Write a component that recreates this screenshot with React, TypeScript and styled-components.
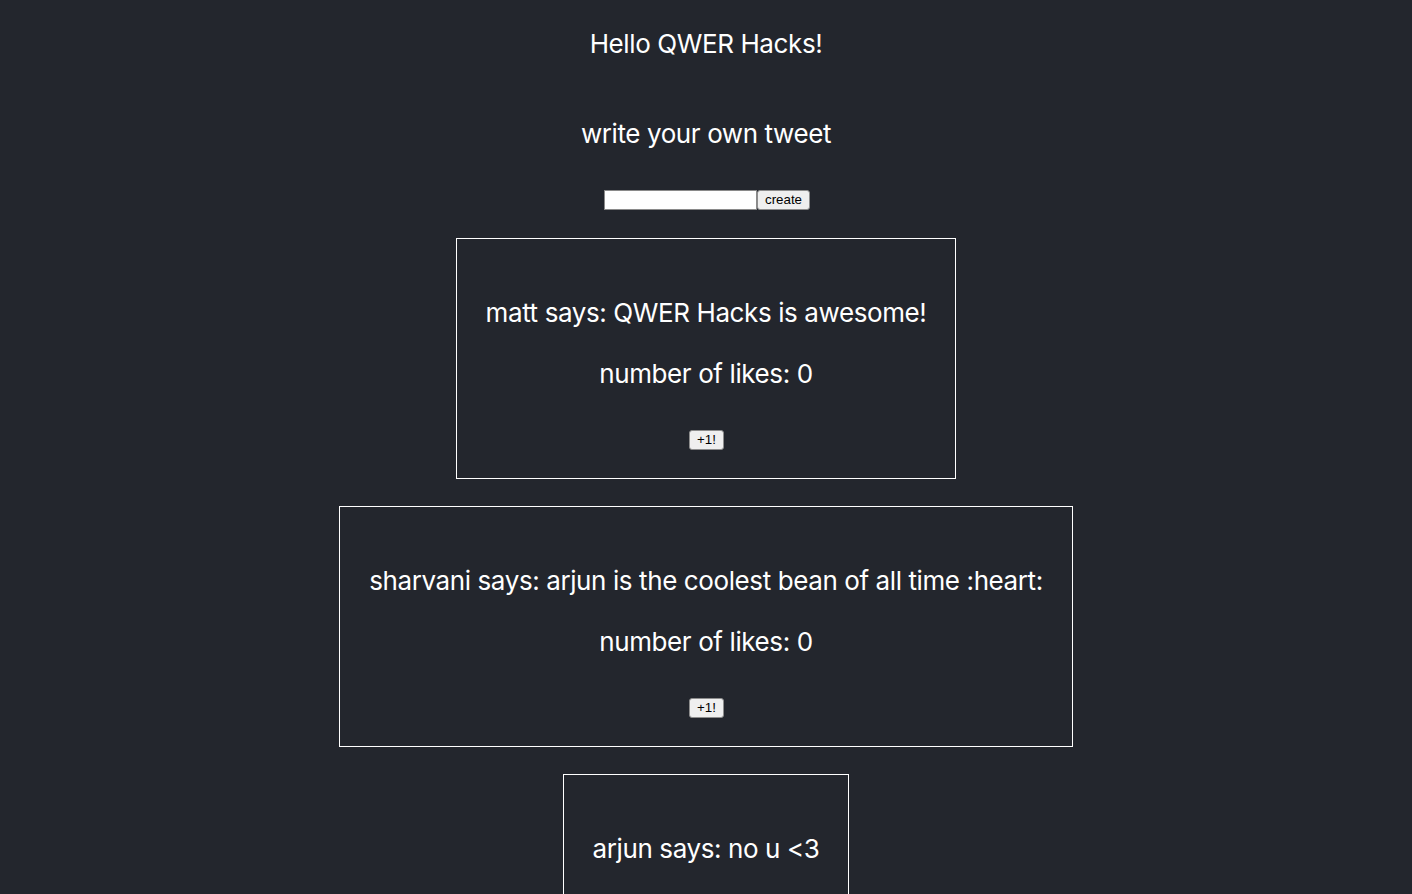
import React from "react";
import styled, { createGlobalStyle } from "styled-components";

const GlobalStyle = createGlobalStyle`
  html, body {
    margin: 0;
    padding: 0;
    background: #23262d;
  }
  body {
    font-family: Inter, "Noto Sans", "Liberation Sans", sans-serif;
    -webkit-font-smoothing: antialiased;
  }
`;

const Page = styled.div`
  min-height: 100vh;
  background: #23262d;
  color: #ffffff;
  display: flex;
  flex-direction: column;
  align-items: center;
  padding-top: 27px;
  text-align: center;
`;

const Line = styled.div<{ $mt?: number }>`
  height: 34px;
  line-height: 34px;
  font-size: 26px;
  letter-spacing: -0.4px;
  margin-top: ${(p) => p.$mt ?? 0}px;
  white-space: nowrap;
`;

const Composer = styled.form`
  display: flex;
  align-items: center;
  margin-top: 39px;
  margin-bottom: 28px;
  padding-left: 2px;
`;

const TextInput = styled.input`
  box-sizing: border-box;
  width: 153px;
  height: 20px;
  margin: 0;
  padding: 1px 2px;
  border: 1px solid #8a8a8a;
  border-radius: 0;
  background: #ffffff;
  font-family: "Liberation Sans", Arial, sans-serif;
  font-size: 13.33px;
  outline: none;
`;

const SmallButton = styled.button`
  box-sizing: border-box;
  height: 20px;
  margin: 0;
  padding: 0 7px;
  background: #efefef;
  color: #000;
  border: 1px solid #8d8d8d;
  border-radius: 3px;
  font-family: "Liberation Sans", Arial, sans-serif;
  font-size: 13.33px;
  line-height: 18px;
  cursor: pointer;
`;

const Card = styled.div`
  box-sizing: border-box;
  border: 1px solid #ffffff;
  padding: 57px 29px 28px;
  margin-bottom: 27px;
  display: flex;
  flex-direction: column;
  align-items: center;
`;

const LikeButton = styled(SmallButton)`
  margin-top: 39px;
  margin-left: 1px;
  padding: 0 7px;
`;

const tweets = [
  { user: "matt", text: "QWER Hacks is awesome!", likes: 0 },
  { user: "sharvani", text: "arjun is the coolest bean of all time :heart:", likes: 0 },
  { user: "arjun", text: "no u <3", likes: 0 },
];

export default function App() {
  return (
    <>
      <GlobalStyle />
      <Page>
        <Line>Hello QWER Hacks!</Line>
        <Line $mt={56}>write your own tweet</Line>
        <Composer onSubmit={(e) => e.preventDefault()}>
          <TextInput type="text" />
          <SmallButton type="submit">create</SmallButton>
        </Composer>
        {tweets.map((t) => (
          <Card key={t.user}>
            <Line>
              {t.user} says: {t.text}
            </Line>
            <Line $mt={27}>number of likes: {t.likes}</Line>
            <LikeButton type="button">+1!</LikeButton>
          </Card>
        ))}
      </Page>
    </>
  );
}
